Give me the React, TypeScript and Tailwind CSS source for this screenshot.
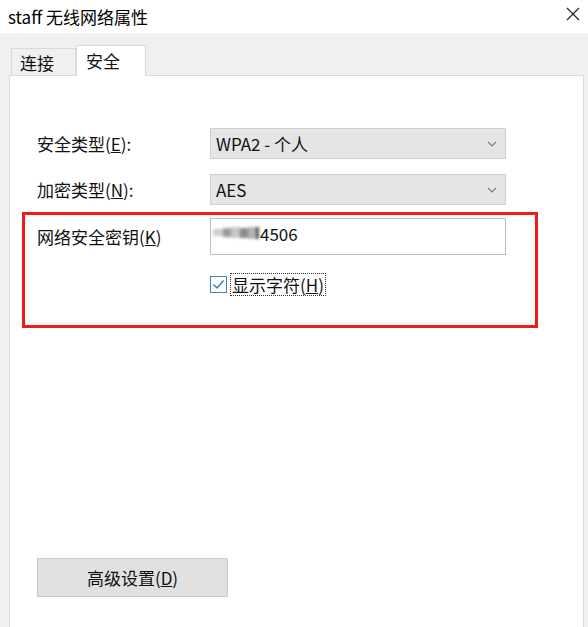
import React from "react";

const FONT = { fontFamily: '"Noto Sans CJK SC", "Noto Sans", sans-serif' };

function Chevron() {
  return (
    <svg width="10" height="6" viewBox="0 0 10 6" className="mr-[8px]">
      <path d="M1 1 L5 5 L9 1" fill="none" stroke="#7a7a7a" strokeWidth="1.1" />
    </svg>
  );
}

function Select({ value }: { value: string }) {
  return (
    <div className="flex h-[31px] w-[296px] items-center justify-between border border-[#d0d0d0] bg-[#e5e5e5] pl-[5px]">
      <span className="text-[17px] leading-none text-[#111]">{value}</span>
      <Chevron />
    </div>
  );
}

export default function App() {
  return (
    <div
      className="flex h-[627px] w-[588px] flex-col overflow-hidden bg-white text-[#111]"
      style={FONT}
    >
      {/* Title bar */}
      <div className="flex h-[33px] shrink-0 items-center justify-between bg-white pl-[8px] pr-[8px]">
        <span className="text-[17px] leading-none text-black">staff 无线网络属性</span>
        <svg width="14" height="14" viewBox="0 0 14 14" className="mb-[6px]">
          <path d="M1 1 L13 13 M13 1 L1 13" stroke="#222" strokeWidth="1.2" fill="none" />
        </svg>
      </div>

      {/* Client area */}
      <div className="flex flex-1 flex-col bg-[#f0f0f0] pl-[9px] pr-[4px]">
        {/* Tabs */}
        <div className="flex h-[42px] shrink-0 items-end">
          <div className="ml-[2px] flex h-[27px] w-[65px] items-center border border-b-0 border-[#d9d9d9] bg-[#f0f0f0] pl-[8px]">
            <span className="text-[17px] leading-none">连接</span>
          </div>
          <div className="relative -mb-px flex h-[31px] w-[70px] items-start border border-b-0 border-[#d9d9d9] bg-white pl-[9px] pt-[6px]">
            <span className="text-[17px] leading-none">安全</span>
          </div>
        </div>

        {/* Panel */}
        <div className="flex flex-1 flex-col border border-b-0 border-[#d9d9d9] bg-white pl-[27px] pt-[52px]">
          <div className="flex items-center">
            <div className="w-[173px] text-[17px] leading-none">
              安全类型(<u>E</u>):
            </div>
            <Select value="WPA2 - 个人" />
          </div>
          <div className="mt-[15px] flex items-center">
            <div className="w-[173px] text-[17px] leading-none">
              加密类型(<u>N</u>):
            </div>
            <Select value="AES" />
          </div>

          {/* Highlighted key area */}
          <div className="-ml-[15px] mt-[7px] h-[116px] w-[516px] border-[3px] border-[#ee1c1c] pl-[12px] pt-[3px]">
            <div className="flex items-center">
              <div className="w-[173px] text-[17px] leading-none">
                网络安全密钥(<u>K</u>)
              </div>
              <div className="flex h-[37px] w-[296px] items-start border border-[#bdbdbd] bg-white pl-[2px] pt-[6px]">
                <div className="flex h-[15px] items-center blur-[1.5px]">
                  <div className="h-[7px] w-[10px] bg-[#cfcfcf]" />
                  <div className="h-[9px] w-[8px] bg-[#9a9a9a]" />
                  <div className="h-[11px] w-[9px] bg-[#c8c8c8]" />
                  <div className="h-[10px] w-[8px] bg-[#8a8a8a]" />
                  <div className="h-[12px] w-[8px] bg-[#b4b4b4]" />
                  <div className="h-[12px] w-[3px] bg-[#555]" />
                </div>
                <span className="ml-[1px] text-[17px] leading-none">4506</span>
              </div>
            </div>
            <div className="ml-[173px] mt-[18px] flex items-center">
              <div className="flex h-[17px] w-[17px] items-center justify-center border border-[#3d86c6] bg-white">
                <svg width="13" height="11" viewBox="0 0 13 11">
                  <path d="M1.5 5.5 L5 9 L11.5 1.5" fill="none" stroke="#2f78c0" strokeWidth="1.4" />
                </svg>
              </div>
              <div className="ml-[3px] flex h-[23px] items-center border border-dotted border-[#333] px-[1px]">
                <span className="text-[17px] leading-none">
                  显示字符(<u>H</u>)
                </span>
              </div>
            </div>
          </div>

          <div className="flex-1" />

          <div className="mb-[30px] flex h-[39px] w-[191px] items-center justify-center border border-[#c8c8c8] bg-[#e1e1e1]">
            <span className="text-[17px] leading-none">
              高级设置(<u>D</u>)
            </span>
          </div>
        </div>
      </div>
    </div>
  );
}
